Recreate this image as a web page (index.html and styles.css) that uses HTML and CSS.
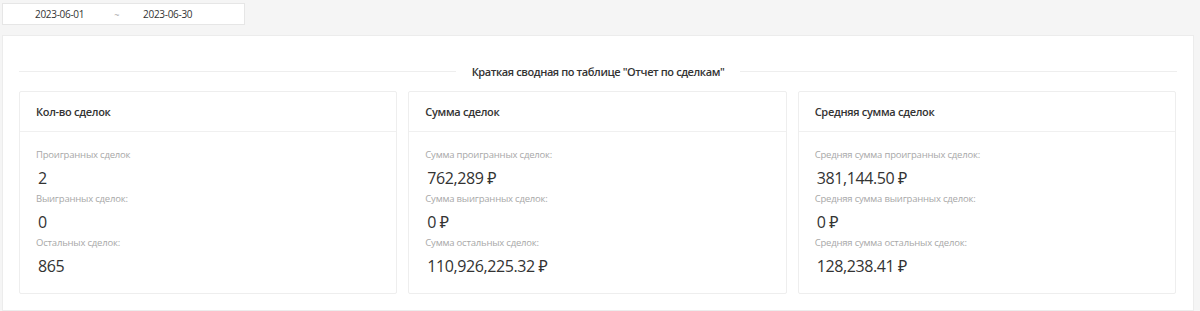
FILE: index.html
```html
<!DOCTYPE html>
<html lang="ru">
  <head>
    <meta charset="UTF-8" />
    <title>Отчет по сделкам</title>
    <link rel="stylesheet" href="styles.css">
  </head>
  <body>
    <div class="date-range">
      <span class="date-range-value">2023-06-01</span>
      <span class="date-range-sep">~</span>
      <span class="date-range-value">2023-06-30</span>
    </div>

    <section class="summary">
      <div class="summary-divider">
        <span class="summary-title">Краткая сводная по таблице "Отчет по сделкам"</span>
      </div>

      <div class="summary-cards">
        <article class="stat-card">
          <h3 class="stat-card-title">Кол-во сделок</h3>
          <div class="stat-card-body">
            <div class="stat-label">Проигранных сделок</div>
            <div class="stat-value">2</div>
            <div class="stat-label">Выигранных сделок:</div>
            <div class="stat-value">0</div>
            <div class="stat-label">Остальных сделок:</div>
            <div class="stat-value">865</div>
          </div>
        </article>

        <article class="stat-card">
          <h3 class="stat-card-title">Сумма сделок</h3>
          <div class="stat-card-body">
            <div class="stat-label">Сумма проигранных сделок:</div>
            <div class="stat-value">762,289 ₽</div>
            <div class="stat-label">Сумма выигранных сделок:</div>
            <div class="stat-value">0 ₽</div>
            <div class="stat-label">Сумма остальных сделок:</div>
            <div class="stat-value">110,926,225.32 ₽</div>
          </div>
        </article>

        <article class="stat-card">
          <h3 class="stat-card-title">Средняя сумма сделок</h3>
          <div class="stat-card-body">
            <div class="stat-label">Средняя сумма проигранных сделок:</div>
            <div class="stat-value">381,144.50 ₽</div>
            <div class="stat-label">Средняя сумма выигранных сделок:</div>
            <div class="stat-value">0 ₽</div>
            <div class="stat-label">Средняя сумма остальных сделок:</div>
            <div class="stat-value">128,238.41 ₽</div>
          </div>
        </article>
      </div>
    </section>
  </body>
</html>
```

FILE: styles.css
```css
body {
  margin: 0;
  padding: 3px 6px 0 2px;
  background-color: #f5f5f5;
  font-family: "Open Sans", "Noto Sans", sans-serif;
  color: #333;
}

.date-range {
  display: flex;
  align-items: center;
  width: 243px;
  height: 22px;
  box-sizing: border-box;
  background-color: #fff;
  border: 1px solid #e6e6e6;
  font-size: 10px;
  letter-spacing: -0.3px;
  color: #333;
  padding-left: 32px;
}
.date-range-sep {
  color: #aaa;
  margin: 0 24px 0 30px;
  font-size: 9px;
}

.summary {
  margin-top: 10px;
  background-color: #fff;
  border: 1px solid #ececec;
  padding: 28px 16px 16px;
}

.summary-divider {
  display: flex;
  align-items: center;
  gap: 16px;
  font-size: 11px;
  line-height: 15px;
  letter-spacing: -0.4px;
  font-weight: 600;
  color: #333;
  margin-bottom: 12px;
}
.summary-divider::before,
.summary-divider::after {
  content: "";
  flex: 1;
  border-top: 1px solid #eeeeee;
}

.summary-cards {
  display: grid;
  grid-template-columns: repeat(3, 1fr);
  gap: 11px;
  margin-right: 1px;
}

.stat-card {
  border: 1px solid #eeeeee;
  border-radius: 2px;
}
.stat-card-title {
  margin: 0;
  height: 39px;
  display: flex;
  align-items: center;
  padding: 0 16px;
  font-size: 11px;
  letter-spacing: -0.3px;
  font-weight: 600;
  color: #333;
  border-bottom: 1px solid #f0f0f0;
}
.stat-card-body {
  padding: 13px 16px 16px;
}
.stat-label {
  font-size: 9.5px;
  letter-spacing: -0.2px;
  line-height: 20px;
  color: #a8a8a8;
}
.stat-value {
  font-size: 16px;
  letter-spacing: -0.4px;
  line-height: 22px;
  padding: 2px 0 0 2px;
  color: #333;
}
```
